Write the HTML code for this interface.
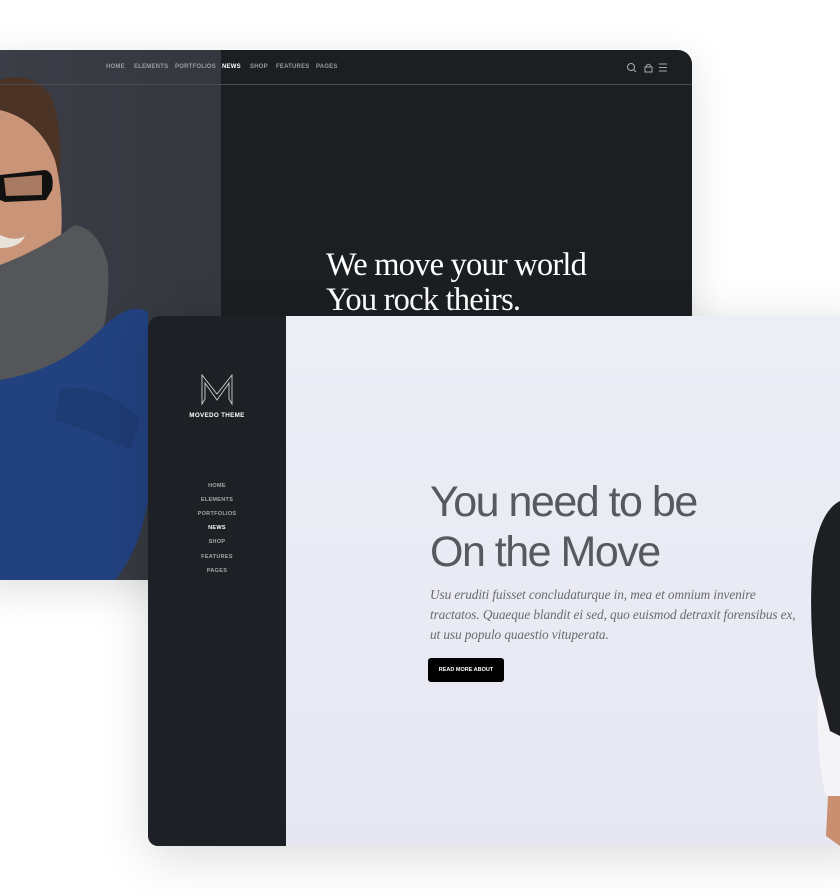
<!DOCTYPE html>
<html><head><meta charset="utf-8"><style>
*{margin:0;padding:0;box-sizing:border-box}
body{width:840px;height:896px;background:#fff;position:relative;overflow:hidden;font-family:"Liberation Sans",sans-serif}
.back{position:absolute;left:-20px;top:50px;width:712px;height:530px;background:#1c1f22;border-radius:0 14px 0 0;overflow:hidden;box-shadow:0 10px 40px rgba(0,0,0,.12)}
.nav{position:absolute;top:14px;font-size:6px;font-weight:bold;color:#9a9ca0;letter-spacing:.2px}
.front{position:absolute;left:148px;top:316px;width:720px;height:530px;border-radius:10px 0 0 10px;overflow:hidden;box-shadow:0 10px 50px rgba(0,0,0,.15);background:linear-gradient(#eceef6,#e6e7f2)}
.side{position:absolute;left:0;top:0;width:138px;height:530px;background:#1d2024}
.si{position:absolute;left:0;width:138px;text-align:center;font-size:5.5px;font-weight:bold;color:#a5a7aa;letter-spacing:.3px}
</style></head><body>
<div class="back">
 <svg style="position:absolute;left:20px;top:0" width="221" height="530" viewBox="0 0 221 530">
  <rect width="221" height="530" fill="#3b3e46"/>
  <rect x="0" y="0" width="221" height="530" fill="url(#g)"/>
  <defs><linearGradient id="g" x1="0" x2="1"><stop offset="0" stop-color="#2d3036" stop-opacity="0"/><stop offset="1" stop-color="#30333a" stop-opacity=".6"/></linearGradient></defs>
  <path d="M0 30 Q30 20 50 45 Q62 70 60 120 L50 180 L0 200 Z" fill="#4a3225"/>
  <path d="M0 60 Q40 70 55 110 Q65 150 60 200 Q50 235 20 245 L0 245 Z" fill="#c99478"/>
  <path d="M0 125 L45 120 Q55 122 52 140 L46 150 L5 152 L0 150 Z" fill="#111"/>
  <path d="M4 128 L42 125 L42 145 L6 146 Z" fill="#a97a62"/>
  <path d="M0 185 Q15 192 25 186 Q20 198 0 198 Z" fill="#e8e2da"/>
  <path d="M0 215 Q40 200 75 175 Q100 180 108 215 Q110 260 100 290 Q70 330 0 345 Z" fill="#55565a"/>
  <path d="M0 330 Q60 320 100 280 Q130 250 148 262 L148 450 Q140 500 115 530 L0 530 Z" fill="#22417f"/>
  <path d="M60 340 Q100 330 140 370 L130 400 Q90 380 55 370 Z" fill="#1f3b74"/>
 </svg>
 <div style="position:absolute;left:20px;right:0;top:34px;height:1px;background:#4a4d52"></div>
 <div class="nav" style="left:126px">HOME</div>
 <div class="nav" style="left:154px">ELEMENTS</div>
 <div class="nav" style="left:195px">PORTFOLIOS</div>
 <div class="nav" style="left:242px;color:#fff">NEWS</div>
 <div class="nav" style="left:270px">SHOP</div>
 <div class="nav" style="left:296px">FEATURES</div>
 <div class="nav" style="left:336px">PAGES</div>
 <svg style="position:absolute;left:645px;top:11px" width="50" height="14" viewBox="0 0 50 14" fill="none" stroke="#aaa" stroke-width="1">
  <circle cx="6" cy="6" r="3.5"/><path d="M8.5 8.5 L11 11"/>
  <path d="M20 6 H27 V11 H20 Z M21.5 6 V4.5 Q23.5 2 25.5 4.5 V6"/>
  <path d="M34 3H42M34 6.5H42M34 10H42"/>
 </svg>
 <div style="position:absolute;left:346px;top:198px;font-family:'Liberation Serif',serif;font-size:32.5px;line-height:35px;color:#fff;letter-spacing:-.8px">We move your world<br>You rock theirs.</div>
</div>
<div class="front">
 <div class="side">
  <svg style="position:absolute;left:52px;top:58px" width="34" height="32" viewBox="0 0 34 32" fill="none" stroke="#d0d0d0" stroke-width=".9">
   <path d="M2 1 V30 L5 25 V9 L17 26 L29 9 V25 L32 30 V1 L17 20 Z"/>
  </svg>
  <div class="si" style="top:96px;font-size:6.3px;color:#fff">MOVEDO THEME</div>
  <div class="si" style="top:167px">HOME</div>
  <div class="si" style="top:181px">ELEMENTS</div>
  <div class="si" style="top:195px">PORTFOLIOS</div>
  <div class="si" style="top:209px;color:#fff">NEWS</div>
  <div class="si" style="top:223px">SHOP</div>
  <div class="si" style="top:238px">FEATURES</div>
  <div class="si" style="top:252px">PAGES</div>
 </div>
 <div style="position:absolute;left:282px;top:161px;font-size:43px;line-height:50px;color:#58595f;letter-spacing:-1.5px">You need to be<br>On the Move</div>
 <div style="position:absolute;left:282px;top:269px;width:372px;font-family:'Liberation Serif',serif;font-style:italic;font-size:13.3px;line-height:20px;color:#6a6a70;letter-spacing:-.1px">Usu eruditi fuisset concludaturque in, mea et omnium invenire tractatos. Quaeque blandit ei sed, quo euismod detraxit forensibus ex, ut usu populo quaestio vituperata.</div>
 <div style="position:absolute;left:280px;top:342px;width:76px;height:24px;background:#000;border-radius:3px;color:#fff;font-size:5.5px;font-weight:bold;text-align:center;line-height:24px">READ MORE ABOUT</div>
 <svg style="position:absolute;left:660px;top:180px" width="60" height="350" viewBox="0 0 60 350">
  <path d="M32 300 L20 300 L18 340 L32 350 Z" fill="#c98f70"/>
  <path d="M10 200 Q8 260 18 300 L32 300 L32 190 Z" fill="#f4f4f8"/>
  <path d="M32 5 Q12 15 5 60 Q0 120 8 180 L22 235 L32 240 Z" fill="#1d1f22"/>
 </svg>
</div>
</body></html>
